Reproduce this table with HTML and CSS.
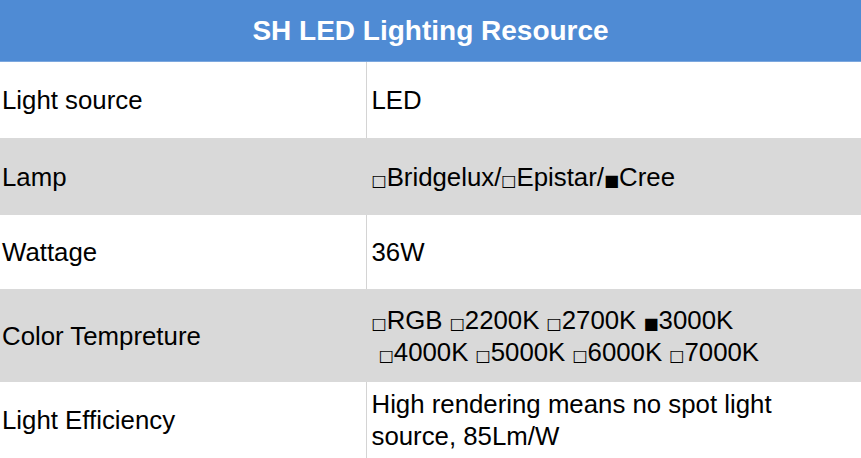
FILE: index.html
```html
<!DOCTYPE html>
<html>
<head>
<meta charset="utf-8">
<link rel="stylesheet" href="styles.css">
</head>
<body>
<table class="spec">
  <colgroup>
    <col class="col-key">
    <col class="col-val">
  </colgroup>
  <thead>
    <tr><th colspan="2" class="title">SH LED Lighting Resource</th></tr>
  </thead>
  <tbody>
    <tr class="r1"><td class="key">Light source</td><td class="val">LED</td></tr>
    <tr class="r2 alt"><td class="key">Lamp</td><td class="val"><span class="sq">□</span>Bridgelux/<span class="sq">□</span>Epistar/<span class="sq">■</span>Cree</td></tr>
    <tr class="r3"><td class="key">Wattage</td><td class="val">36W</td></tr>
    <tr class="r4 alt"><td class="key">Color Tempreture</td><td class="val"><span class="sq">□</span>RGB <span class="sq">□</span>2200K <span class="sq">□</span>2700K <span class="sq">■</span>3000K<br>&nbsp;<span class="sq">□</span>4000K <span class="sq">□</span>5000K <span class="sq">□</span>6000K <span class="sq">□</span>7000K</td></tr>
    <tr class="r5"><td class="key">Light Efficiency</td><td class="val">High rendering means no spot light<br>source, 85Lm/W</td></tr>
  </tbody>
</table>
</body>
</html>
```
FILE: styles.css
```css
html, body {
  margin: 0;
  padding: 0;
  background: #ffffff;
}
body {
  font-family: "Liberation Sans", Arial, sans-serif;
  color: #000000;
  width: 861px;
  height: 458px;
  overflow: hidden;
}
.spec {
  width: 861px;
  border-collapse: collapse;
  table-layout: fixed;
}
.col-key {
  width: 366px;
}
.title {
  background: #4f8bd4;
  color: #ffffff;
  font-weight: bold;
  font-size: 28px;
  height: 61px;
  padding: 0;
  text-align: center;
  vertical-align: middle;
  border-bottom: 1px solid #7ba7de;
}
.spec td {
  font-size: 25.8px;
  line-height: 32px;
  vertical-align: middle;
  padding: 0;
}
.key {
  padding-left: 2px !important;
  border-right: 1px solid #d4d4d4;
}
.val {
  padding-left: 5px !important;
}
.alt td {
  background: #d9d9d9;
  border-right-color: #d9d9d9;
}
.r1 td { height: 76px; }
.r2 td { height: 77px; }
.r3 td { height: 74px; }
.r4 td { height: 93px; }
.r5 td { height: 76px; }
.sq {
  font-family: "DejaVu Sans", sans-serif;
  font-size: 16px;
  line-height: 1;
  color: #000000;
}
```
